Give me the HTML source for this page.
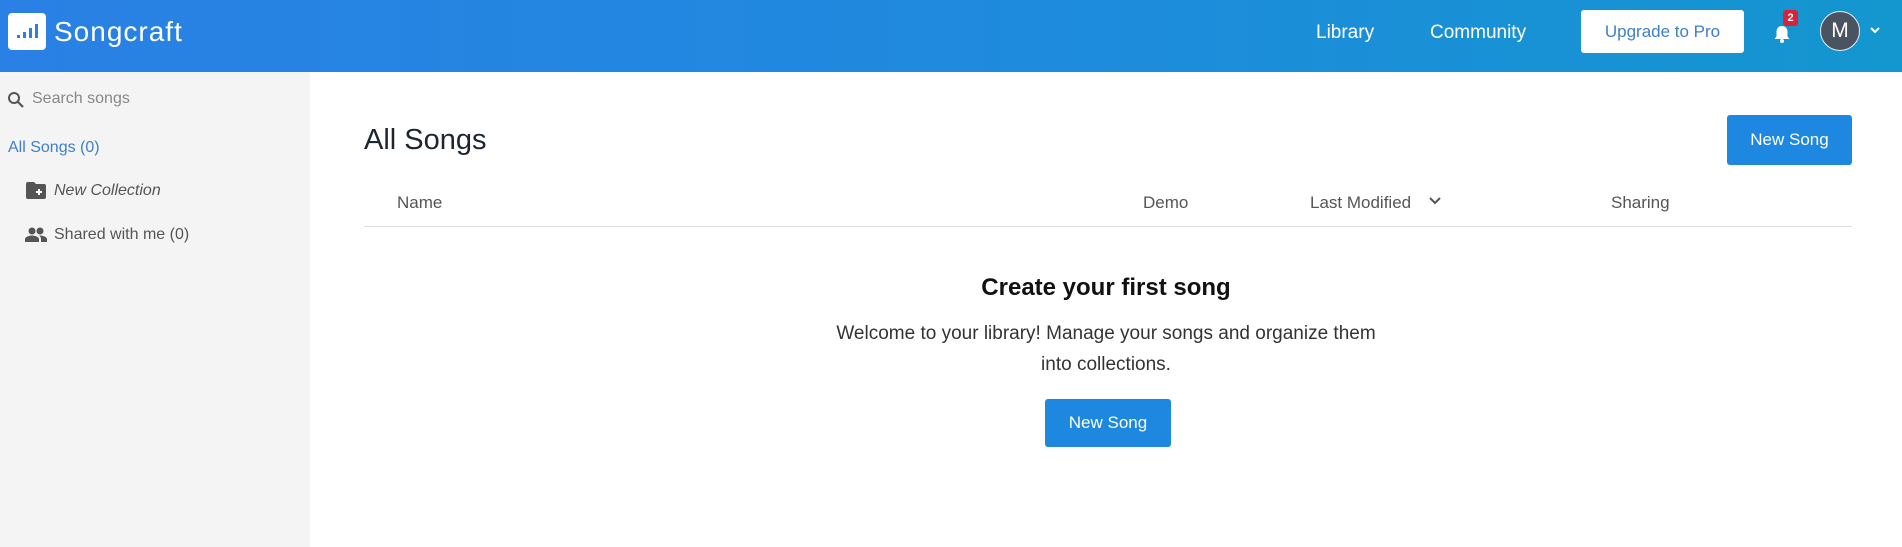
<!DOCTYPE html>
<html><head><style>
*{margin:0;padding:0;box-sizing:border-box}
body{width:1902px;height:547px;overflow:hidden;font-family:"Liberation Sans",sans-serif;background:#fff;position:relative}
.hdr{position:absolute;left:0;top:0;width:1902px;height:72px;background:linear-gradient(90deg,#2a80e4 0%,#1f8ade 50%,#1496cf 100%)}
.abs{position:absolute;white-space:nowrap}
.side{position:absolute;left:0;top:72px;width:310px;height:475px;background:#f4f4f4}
.btn{position:absolute;background:#1e88e0;color:#fff;border-radius:3px;font-size:17px;display:flex;align-items:center;justify-content:center}
.th{position:absolute;top:193px;font-size:17px;color:#555}
</style></head><body>
<div class="hdr">
  <div class="abs" style="left:8px;top:13px;width:38px;height:37px;background:#fff;border-radius:4px">
    <svg width="38" height="37" viewBox="0 0 38 37"><g fill="#2a80e4"><rect x="9" y="22" width="3" height="3"/><rect x="15" y="19" width="3" height="6"/><rect x="21" y="15" width="3" height="10"/><rect x="27" y="11" width="3" height="14"/></g></svg>
  </div>
  <div class="abs" style="left:54px;top:16px;font-size:28px;color:#fff;letter-spacing:1px">Songcraft</div>
  <div class="abs" style="left:1316px;top:22px;font-size:19px;color:#fff">Library</div>
  <div class="abs" style="left:1430px;top:22px;font-size:19px;color:#fff">Community</div>
  <div class="abs" style="left:1581px;top:10px;width:163px;height:43px;background:#fff;border-radius:3px;color:#3d7fc9;font-size:17px;display:flex;align-items:center;justify-content:center">Upgrade to Pro</div>
  <svg class="abs" style="left:1772px;top:24px" width="20" height="20" viewBox="0 0 20 20"><path d="M10 2c-3.5 0-5.5 2.5-5.5 6v4.5L2.5 15h15l-2-2.5V8c0-3.5-2-6-5.5-6z" fill="#fff"/><circle cx="10" cy="17" r="2" fill="#fff"/></svg>
  <div class="abs" style="left:1783px;top:10px;width:15px;height:16px;background:#d9223a;border-radius:3px;color:#fff;font-size:11px;font-weight:bold;text-align:center;line-height:16px">2</div>
  <div class="abs" style="left:1820px;top:11px;width:40px;height:40px;border-radius:50%;background:#4a5360;border:1.5px solid #e6eef5;color:#fff;font-size:21px;text-align:center;line-height:37px">M</div>
  <svg class="abs" style="left:1869px;top:25px" width="12" height="10" viewBox="0 0 12 10"><path d="M2 3l4 4 4-4" stroke="#fff" stroke-width="2" fill="none"/></svg>
</div>
<div class="side">
  <svg class="abs" style="left:7px;top:19px" width="18" height="18" viewBox="0 0 18 18"><circle cx="7" cy="7" r="5" stroke="#555" stroke-width="2" fill="none"/><path d="M10.5 10.5L16 16" stroke="#555" stroke-width="2.2"/></svg>
  <div class="abs" style="left:32px;top:18px;font-size:16px;color:#888">Search songs</div>
  <div class="abs" style="left:8px;top:67px;font-size:16px;color:#3d7fc9">All Songs (0)</div>
  <svg class="abs" style="left:26px;top:110px" width="20" height="17" viewBox="0 0 20 17"><path d="M0 2a2 2 0 0 1 2-2h6l2 2h8a2 2 0 0 1 2 2v11a2 2 0 0 1-2 2H2a2 2 0 0 1-2-2z" fill="#555"/><path d="M13 7v6M10 10h6" stroke="#fff" stroke-width="2"/></svg>
  <div class="abs" style="left:54px;top:110px;font-size:16px;color:#555;font-style:italic">New Collection</div>
  <svg class="abs" style="left:25px;top:155px" width="22" height="15" viewBox="0 0 22 15"><circle cx="7" cy="4" r="3.5" fill="#555"/><circle cx="15" cy="4" r="3.5" fill="#555"/><path d="M0 15v-3c0-2 4-3.5 7-3.5s7 1.5 7 3.5v3z M15 8.5c3 0 7 1.5 7 3.5v3h-6v-3c0-1.3-.6-2.5-1.8-3.4z" fill="#555"/></svg>
  <div class="abs" style="left:54px;top:154px;font-size:16px;color:#555">Shared with me (0)</div>
</div>
<div class="abs" style="left:364px;top:124px;font-size:29px;color:#1c2530">All Songs</div>
<div class="btn" style="left:1727px;top:115px;width:125px;height:50px">New Song</div>
<div class="th" style="left:397px">Name</div>
<div class="th" style="left:1143px">Demo</div>
<div class="th" style="left:1310px">Last Modified</div>
<svg class="abs" style="left:1428px;top:196px" width="14" height="10" viewBox="0 0 14 10"><path d="M2 2l5 5 5-5" stroke="#555" stroke-width="2" fill="none"/></svg>
<div class="th" style="left:1611px">Sharing</div>
<div class="abs" style="left:364px;top:226px;width:1488px;height:1px;background:#ddd"></div>
<div class="abs" style="left:310px;width:1592px;top:274px;text-align:center;font-size:24px;font-weight:bold;color:#111">Create your first song</div>
<div class="abs" style="left:310px;width:1592px;top:318px;text-align:center;font-size:19px;line-height:31px;color:#333;white-space:normal"><div style="width:560px;margin:0 auto">Welcome to your library! Manage your songs and organize them into collections.</div></div>
<div class="btn" style="left:1045px;top:399px;width:126px;height:48px">New Song</div>
</body></html>
